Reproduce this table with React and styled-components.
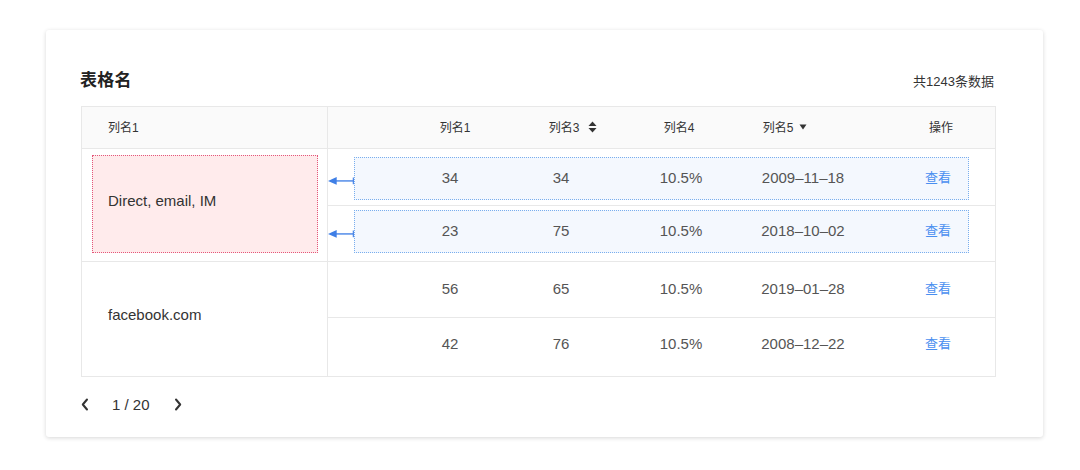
import React from "react";
import styled, { createGlobalStyle } from "styled-components";

const GlobalStyle = createGlobalStyle`
  html, body { margin: 0; padding: 0; background: #ffffff; }
  body {
    font-family: "Liberation Sans", "Noto Sans CJK SC", sans-serif;
    color: #333;
  }
  * { box-sizing: border-box; }
`;

const Page = styled.div`
  padding: 30px 0 33px 46px;
  min-height: 470px;
`;

const Card = styled.div`
  width: 997px;
  height: 407px;
  background: #fff;
  border-radius: 3px;
  box-shadow: 0 1px 4px rgba(0, 0, 0, 0.16);
  padding: 36px 47px 0 35px;
`;

const TitleBar = styled.div`
  display: flex;
  align-items: center;
  justify-content: space-between;
  height: 24px;
  margin-bottom: 16px;
`;

const Title = styled.h2`
  margin: 0 0 0 -1px;
  font-size: 17px;
  font-weight: 700;
  color: #222;
  letter-spacing: 0.3px;
`;

const Count = styled.span`
  font-size: 13px;
  color: #333;
  margin-top: 4px;
  margin-right: 2px;
`;

const Table = styled.div`
  width: 915px;
  border: 1px solid #e8e8e8;
`;

const HeadRow = styled.div`
  display: flex;
  height: 42px;
  background: #fafafa;
  border-bottom: 1px solid #e8e8e8;
`;

const LeftHead = styled.div`
  width: 246px;
  flex: none;
  border-right: 1px solid #e8e8e8;
  display: flex;
  align-items: center;
  padding: 0 0 2px 26px;
  font-size: 12px;
  color: #333;
`;

const ColumnGrid = styled.div`
  display: grid;
  grid-template-columns: 100px 122px 118px 126px 144px;
  align-items: center;
  padding-left: ${(p) => p.$pad}px;
`;

const HeadGrid = styled(ColumnGrid)`
  flex: 1;
  padding-bottom: 2px;
`;

const HeadCell = styled.div`
  display: flex;
  align-items: center;
  justify-content: center;
  gap: 9px;
  font-size: 12px;
  color: #333;
  padding-left: ${(p) => (p.$shift > 0 ? p.$shift * 2 : 0)}px;
  padding-right: ${(p) => (p.$shift < 0 ? -p.$shift * 2 : 0)}px;
`;

const DownGap = styled.span`
  display: inline-flex;
  margin-left: -3px;
`;

const Group = styled.div`
  display: flex;
  & + & {
    border-top: 1px solid #e8e8e8;
  }
`;

const LeftCell = styled.div`
  width: 246px;
  flex: none;
  border-right: 1px solid #e8e8e8;
  display: flex;
  align-items: stretch;
  padding: ${(p) => (p.$marked ? "6px 9px 8px 10px" : "0 0 0 26px")};
  font-size: 15px;
  color: #333;
`;

const Plain = styled.div`
  display: flex;
  align-items: center;
  flex: 1;
  padding-bottom: 9px;
`;

const Marked = styled.div`
  flex: 1;
  display: flex;
  align-items: center;
  padding: 0 0 7px 15px;
  background: #ffebec;
  border: 1px dotted #e4577a;
`;

const Rows = styled.div`
  flex: 1;
  display: flex;
  flex-direction: column;
`;

const Row = styled.div`
  height: ${(p) => p.$h}px;
  display: flex;
  align-items: center;
  padding-top: ${(p) => p.$pt || 0}px;
  padding-bottom: ${(p) => p.$pb || 0}px;
  & + & {
    border-top: 1px solid #e8e8e8;
  }
`;

const ArrowSlot = styled.div`
  width: 26px;
  height: 16px;
  flex: none;
  display: flex;
  align-items: center;
`;

const DataBox = styled(ColumnGrid)`
  width: 615px;
  height: 43px;
  border: 1px dotted ${(p) => (p.$marked ? "#79aeee" : "transparent")};
  background: ${(p) => (p.$marked ? "#f4f8fe" : "transparent")};
`;

const DataCell = styled.div`
  text-align: center;
  font-size: 15px;
  color: #555;
  padding-bottom: 2px;
`;

const LinkCell = styled.a`
  justify-self: center;
  font-size: 13px;
  color: #4a8ff0;
  text-decoration: none;
  cursor: pointer;
  padding-bottom: 4px;
`;

const Pager = styled.div`
  display: flex;
  align-items: center;
  height: 24px;
  margin-top: 15px;
  margin-left: -2px;
`;

const PageButton = styled.button`
  border: none;
  background: none;
  padding: 0;
  width: 12px;
  height: 16px;
  display: flex;
  align-items: center;
  justify-content: center;
  cursor: pointer;
`;

const PageText = styled.span`
  font-size: 15px;
  color: #333;
  margin: 0 22px 0 21px;
`;

const SortBoth = () => (
  <svg width="9" height="12" viewBox="0 0 9 12">
    <path d="M4.5 0.5 L8.5 5 L0.5 5 Z" fill="#333" />
    <path d="M4.5 11.5 L8.5 7 L0.5 7 Z" fill="#333" />
  </svg>
);

const SortDown = () => (
  <svg width="8" height="6" viewBox="0 0 8 6">
    <path d="M0.5 0.5 L7.5 0.5 L4 5.5 Z" fill="#333" />
  </svg>
);

const Arrow = () => (
  <svg width="27" height="16" viewBox="0 0 27 16">
    <path d="M0 10 L9 6 L9 14 Z" fill="#3f7fe6" />
    <line x1="8" y1="10" x2="26.5" y2="10" stroke="#3f7fe6" strokeWidth="1.4" />
    <line x1="26.3" y1="6.5" x2="26.3" y2="13.5" stroke="#3f7fe6" strokeWidth="1.2" />
  </svg>
);

const ChevronLeft = () => (
  <svg width="8" height="13" viewBox="0 0 8 13">
    <path d="M6 1.5 L1.8 6.5 L6 11.5" fill="none" stroke="#333" strokeWidth="2" strokeLinecap="round" strokeLinejoin="round" />
  </svg>
);

const ChevronRight = () => (
  <svg width="8" height="13" viewBox="0 0 8 13">
    <path d="M2 1.5 L6.2 6.5 L2 11.5" fill="none" stroke="#333" strokeWidth="2" strokeLinecap="round" strokeLinejoin="round" />
  </svg>
);

const groups = [
  {
    name: "Direct, email, IM",
    marked: true,
    rows: [
      { a: "34", b: "34", c: "10.5%", d: "2009–11–18", h: 56, pt: 3, pb: 0 },
      { a: "23", b: "75", c: "10.5%", d: "2018–10–02", h: 56, pt: 0, pb: 4 },
    ],
  },
  {
    name: "facebook.com",
    marked: false,
    rows: [
      { a: "56", b: "65", c: "10.5%", d: "2019–01–28", h: 55, pt: 0, pb: 0 },
      { a: "42", b: "76", c: "10.5%", d: "2008–12–22", h: 59, pt: 0, pb: 5 },
    ],
  },
];

export default function App() {
  return (
    <>
      <GlobalStyle />
      <Page>
        <Card>
          <TitleBar>
            <Title>表格名</Title>
            <Count>共1243条数据</Count>
          </TitleBar>
          <Table>
            <HeadRow>
              <LeftHead>列名1</LeftHead>
              <HeadGrid $pad={72}>
                <HeadCell $shift={5}>列名1</HeadCell>
                <HeadCell $shift={12}>
                  列名3 <SortBoth />
                </HeadCell>
                <HeadCell $shift={-2}>列名4</HeadCell>
                <HeadCell $shift={-18}>
                  列名5
                  <DownGap>
                    <SortDown />
                  </DownGap>
                </HeadCell>
                <HeadCell $shift={3}>操作</HeadCell>
              </HeadGrid>
            </HeadRow>
            {groups.map((g) => (
              <Group key={g.name}>
                <LeftCell $marked={g.marked}>
                  {g.marked ? <Marked>{g.name}</Marked> : <Plain>{g.name}</Plain>}
                </LeftCell>
                <Rows>
                  {g.rows.map((r) => (
                    <Row key={r.d} $h={r.h} $pt={r.pt} $pb={r.pb}>
                      <ArrowSlot>{g.marked && <Arrow />}</ArrowSlot>
                      <DataBox $pad={45} $marked={g.marked}>
                        <DataCell>{r.a}</DataCell>
                        <DataCell>{r.b}</DataCell>
                        <DataCell>{r.c}</DataCell>
                        <DataCell>{r.d}</DataCell>
                        <LinkCell>查看</LinkCell>
                      </DataBox>
                    </Row>
                  ))}
                </Rows>
              </Group>
            ))}
          </Table>
          <Pager>
            <PageButton aria-label="上一页">
              <ChevronLeft />
            </PageButton>
            <PageText>1 / 20</PageText>
            <PageButton aria-label="下一页">
              <ChevronRight />
            </PageButton>
          </Pager>
        </Card>
      </Page>
    </>
  );
}
